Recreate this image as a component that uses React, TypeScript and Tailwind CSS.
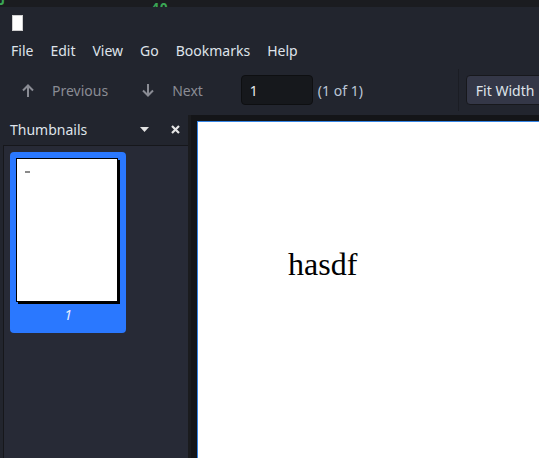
import React from "react";

const ArrowUp = () => (
  <svg width="12" height="13" viewBox="0 0 12 13" fill="none" stroke="#8a8c94" strokeWidth="2" strokeLinecap="butt">
    <path d="M6 13V2" />
    <path d="M1 6.5 6 1.5l5 5" />
  </svg>
);

const ArrowDown = () => (
  <svg width="12" height="13" viewBox="0 0 12 13" fill="none" stroke="#8a8c94" strokeWidth="2" strokeLinecap="butt">
    <path d="M6 0v11" />
    <path d="M1 6.5 6 11.5l5-5" />
  </svg>
);

export default function App() {
  const menu = ["File", "Edit", "View", "Go", "Bookmarks", "Help"];
  return (
    <div
      className="w-[539px] h-[458px] overflow-hidden flex flex-col bg-[#22252e] text-[14px] text-[#dfe3ea]"
      style={{ fontFamily: '"Noto Sans", sans-serif' }}
    >
      {/* background terminal sliver */}
      <div className="h-[7px] bg-[#1b1c20] relative overflow-hidden shrink-0">
        <span className="absolute left-[-3px] top-[-8px] text-[14px] leading-[16px] text-[#3aa655] font-bold" style={{ fontFamily: '"DejaVu Sans Mono", monospace' }}>J</span>
        <span className="absolute left-[151px] top-[0px] text-[14px] leading-[16px] text-[#3aa655] font-bold" style={{ fontFamily: '"DejaVu Sans Mono", monospace' }}>40</span>
      </div>
      {/* title bar */}
      <div className="h-[31px] shrink-0 pl-[12px] pt-[8px]">
        <div className="w-[11px] h-[16px] bg-white border border-[#cfcfcf]" />
      </div>
      {/* menu bar */}
      <div className="h-[27px] shrink-0 flex items-center pl-[11px] gap-[17px] leading-none pb-[1px] whitespace-nowrap">
        {menu.map((m) => (
          <span key={m}>{m}</span>
        ))}
      </div>
      {/* toolbar */}
      <div className="h-[50px] shrink-0 flex items-center pl-[22px] text-[#8a8c94] whitespace-nowrap">
        <span className="shrink-0"><ArrowUp /></span>
        <span className="ml-[18px] shrink-0">Previous</span>
        <span className="ml-[34px] shrink-0"><ArrowDown /></span>
        <span className="ml-[18px] shrink-0">Next</span>
        <div className="ml-[38px] w-[72px] h-[30px] shrink-0 rounded-[4px] bg-[#16181c] border border-[#0e0f11] flex items-center pl-[8px] text-[#e6e8ee]">
          1
        </div>
        <span className="ml-[5px] shrink-0 text-[#bcc5d6]">(1 of 1)</span>
        <div className="ml-[95px] w-px h-[42px] shrink-0 bg-[#1b1d24]" />
        <div className="ml-[7px] h-[30px] pl-[9px] pr-[12px] rounded-[4px] bg-[#343747] border border-[#17181c] flex items-center text-[#dfe3ea] whitespace-nowrap shrink-0">
          Fit Width
        </div>
      </div>
      {/* body */}
      <div className="flex flex-1 min-h-0">
        {/* sidebar */}
        <div className="w-[188px] shrink-0 flex flex-col">
          <div className="h-[30px] shrink-0 flex items-center pl-[10px] pb-[1px]">
            <span className="text-[#dfe3ea]">Thumbnails</span>
            <svg className="ml-[53px]" width="9" height="5" viewBox="0 0 9 5">
              <path d="M0 0h9L4.5 5z" fill="#e2e2e2" />
            </svg>
            <svg className="ml-[22px]" width="9" height="9" viewBox="0 0 9 9" stroke="#e5e5e5" strokeWidth="2.2">
              <path d="M1 1l7 7M8 1 1 8" />
            </svg>
          </div>
          <div className="flex-1 ml-[3px] border-l border-t border-[#16171b] bg-[#272a36] pl-[6px] pt-[6px]">
            <div className="w-[116px] h-[181px] rounded-[4px] bg-[#2a78ff] pl-[6px] pt-[6px] flex flex-col">
              <div className="relative w-[104px] h-[146px]">
                <div className="absolute left-[2px] top-[2px] w-[102px] h-[144px] bg-black" />
                <div className="absolute left-0 top-0 w-[102px] h-[144px] bg-white border border-black">
                  <div className="absolute left-[8px] top-[12px] w-[5px] h-[2px] bg-[#8a8a8a]" />
                </div>
              </div>
              <div className="w-[104px] text-center italic text-[14px] leading-none mt-[4px] text-[#e6eeff]">1</div>
            </div>
          </div>
        </div>
        {/* document area */}
        <div className="flex-1 flex bg-[#141518] border-l-[3px] border-[#1a1b1e] min-w-0">
          <div className="flex-1 mt-[6px] ml-[6px] border-l border-t border-[#3584e4] bg-white relative">
            <div
              className="pt-[126px] pl-[90px] text-[32px] leading-[32px] text-black"
              style={{ fontFamily: '"Liberation Serif", serif' }}
            >
              hasdf
            </div>
          </div>
        </div>
      </div>
    </div>
  );
}
